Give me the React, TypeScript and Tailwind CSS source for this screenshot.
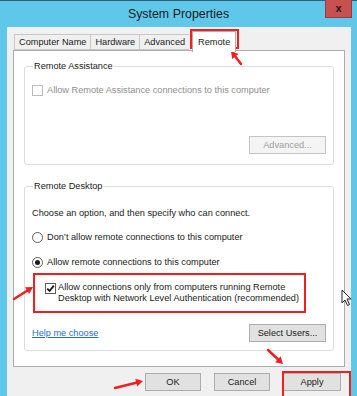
import type { ReactNode } from "react";

const font = { fontFamily: '"Liberation Sans", Arial, sans-serif' };

function Arrow({ x1, y1, x2, y2, className }: { x1: number; y1: number; x2: number; y2: number; className: string }) {
  // red annotation arrow, head at (x2, y2)
  const ang = Math.atan2(y2 - y1, x2 - x1);
  const len = 7;
  const w = 4;
  const bx = x2 - Math.cos(ang) * len;
  const by = y2 - Math.sin(ang) * len;
  const px = -Math.sin(ang) * w;
  const py = Math.cos(ang) * w;
  return (
    <svg className={className} width="357" height="396" viewBox="0 0 357 396">
      <line x1={x1} y1={y1} x2={bx} y2={by} stroke="#ee2020" strokeWidth="2.5" strokeLinecap="round" />
      <polygon points={`${x2},${y2} ${bx + px},${by + py} ${bx - px},${by - py}`} fill="#ee2020" />
    </svg>
  );
}

function Tab({ label, active }: { label: string; active?: boolean }) {
  return active ? (
    <div className="relative z-10 -mb-px ml-[2px] flex h-[21px] items-center border border-b-0 border-[#adadad] bg-white px-[5px] text-[#1a1a1a]">
      {label}
    </div>
  ) : (
    <div className="mt-[3px] flex h-[16px] items-center border border-r-0 border-[#c8c8c8] bg-[#f0f0f0] px-[4px] text-[#1a1a1a] last:border-r">
      {label}
    </div>
  );
}

function Group({ title, children, className }: { title: string; children: ReactNode; className?: string }) {
  return (
    <fieldset className={`rounded-[3px] border border-[#dcdcdc] px-[7px] ${className ?? ""}`}>
      <legend className="ml-[1px] px-[1px] text-[#1a1a1a]">{title}</legend>
      {children}
    </fieldset>
  );
}

function Button({ label, disabled, className }: { label: string; disabled?: boolean; className?: string }) {
  return (
    <div
      className={`flex items-center justify-center border ${
        disabled ? "border-[#c4c4c4] bg-[#f4f4f4] text-[#9c9c9c]" : "border-[#adadad] bg-[#e1e1e1] text-[#1a1a1a]"
      } ${className ?? ""}`}
    >
      {label}
    </div>
  );
}

function Radio({ checked, label }: { checked?: boolean; label: string }) {
  return (
    <div className="flex items-center gap-[4px]">
      <div className="flex h-[11px] w-[11px] items-center justify-center rounded-full border border-[#5d5d5d] bg-white">
        {checked && <div className="h-[5px] w-[5px] rounded-full bg-[#1a1a1a]" />}
      </div>
      <span>{label}</span>
    </div>
  );
}

export default function App() {
  return (
    <div className="relative h-[396px] w-[357px] overflow-hidden bg-[#5fc8ea] text-[9.2px] leading-[11px]" style={font}>
      {/* title bar */}
      <div className="flex h-[27px] items-center justify-center border-t border-[#2f5f74] text-[12.4px] text-[#1a1a1a]">
        System Properties
      </div>
      <div className="absolute right-[5px] top-0 flex h-[18px] w-[27px] items-center justify-center border border-t-0 border-[#9a3a3a] bg-[#c75050] text-[11px] font-bold text-[#1a1a1a]">
        x
      </div>

      {/* dialog body */}
      <div className="ml-[7px] h-[369px] w-[344px] bg-[#f0f0f0] pt-[4px]">
        <div className="flex h-[19px] items-start pl-[7px]">
          <Tab label="Computer Name" />
          <Tab label="Hardware" />
          <Tab label="Advanced" />
          <div className="w-[1px] self-stretch" />
          <Tab label="Remote" active />
        </div>

        <div className="ml-[6px] h-[317px] w-[332px] border border-[#adadad] bg-white px-[10px] pt-[10px]">
          <Group title="Remote Assistance" className="h-[104px]">
            <div className="mt-[13px] flex items-center gap-[4px] text-[#8e8e8e]">
              <div className="h-[11px] w-[11px] border border-[#bcbcbc] bg-white" />
              <span>Allow Remote Assistance connections to this computer</span>
            </div>
            <div className="mt-[40px] flex justify-end">
              <Button label="Advanced..." disabled className="h-[18px] w-[77px]" />
            </div>
          </Group>

          <Group title="Remote Desktop" className="mt-[16px] h-[170px]">
            <div className="mt-[16px] text-[#1a1a1a]">Choose an option, and then specify who can connect.</div>
            <div className="mt-[13px] text-[#1a1a1a]">
              <Radio label="Don’t allow remote connections to this computer" />
            </div>
            <div className="mt-[14px] text-[#1a1a1a]">
              <Radio checked label="Allow remote connections to this computer" />
            </div>
            <div className="mt-[14px] flex items-start gap-[2px] pl-[13px] text-[#1a1a1a]">
              <div className="mt-[1px] flex h-[11px] w-[11px] shrink-0 items-center justify-center border border-[#5d5d5d] bg-white">
                <svg width="9" height="9" viewBox="0 0 9 9">
                  <path d="M1.2 4.6 L3.6 7 L7.8 1.6" fill="none" stroke="#1a1a1a" strokeWidth="1.8" />
                </svg>
              </div>
              <span>
                Allow connections only from computers running Remote
                <br />
                Desktop with Network Level Authentication (recommended)
              </span>
            </div>
            <div className="mt-[20px] flex items-center justify-between">
              <span className="text-[#1f6fd0] underline">Help me choose</span>
              <Button label="Select Users..." className="h-[18px] w-[77px]" />
            </div>
          </Group>
        </div>

        <div className="mt-[6px] flex gap-[13px] pl-[138px]">
          <Button label="OK" className="h-[18px] w-[56px]" />
          <Button label="Cancel" className="h-[18px] w-[56px]" />
          <Button label="Apply" className="h-[18px] w-[58px]" />
        </div>
      </div>

      {/* annotations */}
      <div className="absolute left-[190px] top-[29px] h-[20px] w-[49px] border-2 border-[#ee2020]" />
      <div className="absolute left-[33px] top-[273px] h-[40px] w-[273px] border-2 border-[#ee2020]" />
      <div className="absolute left-[282px] top-[371px] h-[28px] w-[69px] border-2 border-[#ee2020]" />
      <Arrow className="pointer-events-none absolute left-0 top-0" x1={241} y1={64} x2={231} y2={51} />
      <Arrow className="pointer-events-none absolute left-0 top-0" x1={14} y1={299} x2={33} y2={287} />
      <Arrow className="pointer-events-none absolute left-0 top-0" x1={268} y1={350} x2={283} y2={364} />
      <Arrow className="pointer-events-none absolute left-0 top-0" x1={115} y1={388} x2={143} y2={381} />

      {/* mouse cursor */}
      <svg className="pointer-events-none absolute left-[341px] top-[289px]" width="12" height="18" viewBox="0 0 12 18">
        <path d="M1 1 L1 14 L4 11 L6.5 16.5 L8.5 15.5 L6 10 L10 10 Z" fill="white" stroke="#222" strokeWidth="1" />
      </svg>
    </div>
  );
}
